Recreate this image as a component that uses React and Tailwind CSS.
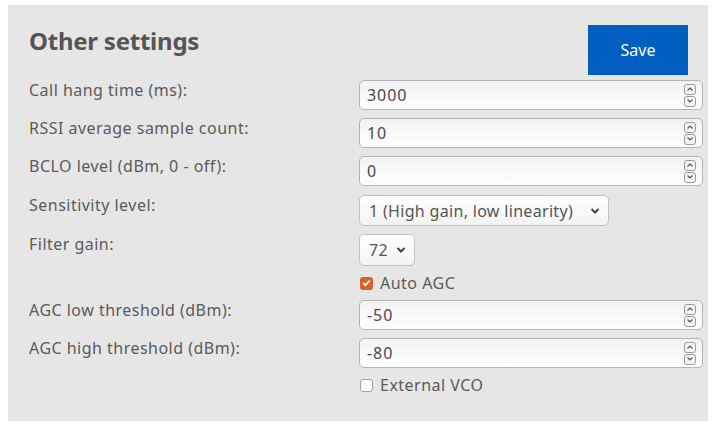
import React from "react";

const FONT = { fontFamily: '"Noto Sans", "Open Sans", sans-serif' };

function Spinner() {
  return (
    <div className="flex flex-col gap-[1px] mr-[6px]">
      <span className="w-[12px] h-[11px] rounded-[3px] border border-[#9a9a9a] bg-[#f4f4f4] flex items-center justify-center">
        <svg width="8" height="6" viewBox="0 0 8 6"><path d="M1.5 4.5 L4 2 L6.5 4.5" fill="none" stroke="#555" strokeWidth="1.2" /></svg>
      </span>
      <span className="w-[12px] h-[11px] rounded-[3px] border border-[#9a9a9a] bg-[#f4f4f4] flex items-center justify-center">
        <svg width="8" height="6" viewBox="0 0 8 6"><path d="M1.5 1.5 L4 4 L6.5 1.5" fill="none" stroke="#555" strokeWidth="1.2" /></svg>
      </span>
    </div>
  );
}

function NumberField({ value }) {
  return (
    <div className="h-[30px] w-[344px] flex items-center justify-between rounded-[5px] border border-[#b4b4b4] bg-gradient-to-b from-[#f2f2f2] to-white pl-[7px] text-[16px] tracking-[0.06em] text-[#4a4a4a]">
      <span>{value}</span>
      <Spinner />
    </div>
  );
}

function SelectField({ value, width, height }) {
  return (
    <div className={`${height} ${width} flex items-center justify-between rounded-[5px] border border-[#c2c2c2] bg-gradient-to-b from-white to-[#f3f3f3] pl-[9px] pr-[8px] text-[16px] tracking-[0.02em] text-[#555]`}>
      <span>{value}</span>
      <svg width="10" height="8" viewBox="0 0 10 8"><path d="M1.5 2 L5 5.5 L8.5 2" fill="none" stroke="#444" strokeWidth="2" /></svg>
    </div>
  );
}

function CheckRow({ label, checked }) {
  return (
    <div className="h-[24px] flex items-center gap-[7px] pl-[1px] text-[16px] tracking-[0.03em] text-[#5a5a5a]">
      {checked ? (
        <span className="w-[13px] h-[13px] rounded-[3px] bg-[#d9622b] flex items-center justify-center">
          <svg width="9" height="8" viewBox="0 0 9 8"><path d="M1.2 4 L3.5 6.2 L7.8 1.5" fill="none" stroke="white" strokeWidth="1.8" /></svg>
        </span>
      ) : (
        <span className="w-[13px] h-[13px] rounded-[3px] border border-[#a0a0a0] bg-white" />
      )}
      <span>{label}</span>
    </div>
  );
}

function Label({ children }) {
  return <div className="text-[16px] leading-5 tracking-[0.03em] text-[#5a5a5a]">{children}</div>;
}

export default function App() {
  return (
    <div className="min-h-screen bg-white pt-[5px] pl-[8px]" style={FONT}>
      <div className="w-[700px] h-[416px] bg-[#e6e6e6] pl-[21px] pr-[20px] pt-[20px]">
        {/* Header */}
        <div className="flex items-start justify-between h-[50px]">
          <h2 className="text-[24px] leading-[30px] font-bold text-[#555] mt-[1px] tracking-[-0.01em]">Other settings</h2>
          <button className="w-[100px] h-[50px] bg-[#005ec0] text-white text-[16px]">Save</button>
        </div>

        {/* Fields */}
        <div className="grid grid-cols-[330px_344px] gap-y-[8px] mt-[5px]">
          <Label>Call hang time (ms):</Label>
          <NumberField value="3000" />
          <Label>RSSI average sample count:</Label>
          <NumberField value="10" />
          <Label>BCLO level (dBm, 0 - off):</Label>
          <NumberField value="0" />
          <div className="pt-[1px]"><Label>Sensitivity level:</Label></div>
          <div className="pt-[1px]"><SelectField value="1 (High gain, low linearity)" width="w-[250px]" height="h-[31px]" /></div>
          <Label>Filter gain:</Label>
          <SelectField value="72" width="w-[56px]" height="h-[32px]" />
          <div />
          <div className="-mt-[3px]"><CheckRow label="Auto AGC" checked /></div>
          <div className="-mt-[3px]"><Label>AGC low threshold (dBm):</Label></div>
          <div className="-mt-[3px]"><NumberField value="-50" /></div>
          <Label>AGC high threshold (dBm):</Label>
          <NumberField value="-80" />
          <div />
          <div className="-mt-[3px]"><CheckRow label="External VCO" /></div>
        </div>
      </div>
    </div>
  );
}
